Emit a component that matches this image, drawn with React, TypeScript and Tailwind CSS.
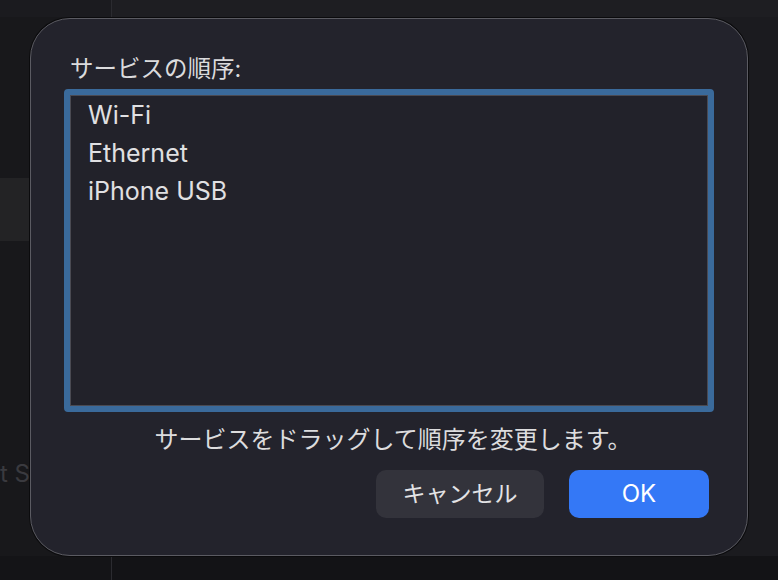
const services = ["Wi-Fi", "Ethernet", "iPhone USB"];

const font = "font-['Inter','Noto_Sans_CJK_JP',sans-serif]";

const App = () => {
  return (
    <div className={`relative w-[778px] h-[580px] overflow-hidden bg-[#1b1b1f] ${font}`}>
      {/* window behind the sheet */}
      <div className="flex h-full">
        <div className="w-[112px] flex flex-col bg-[#18181b] border-r border-[#2b2b30] overflow-hidden">
          <div className="h-[17px] bg-[#1b1b1f]" />
          <div className="h-[161px]" />
          <div className="h-[63px] w-[29px] bg-[#232325]" />
          <div className="flex-1 flex flex-col justify-end">
            <div className="pb-[68px] whitespace-nowrap text-[24px] leading-[28px] text-[#3a3a3f]">
              t S
            </div>
          </div>
          <div className="h-[24px] bg-[#141417]" />
        </div>
        <div className="flex-1 flex flex-col">
          <div className="h-[17px] bg-[#1e1e22]" />
          <div className="flex-1 bg-[#1b1b1f]" />
          <div className="h-[24px] bg-[#131316]" />
        </div>
      </div>

      {/* sheet */}
      <div className="absolute left-[30px] top-[18px] w-[718px] h-[538px] rounded-[40px] bg-[#23232c] border border-[#5b5b62] shadow-[0_0_0_1px_#0b0b0d] px-[33px] pt-[36px] flex flex-col">
        <div className="pl-[6px] text-[23.5px] leading-[28px] text-[#dbdbdd]">サービスの順序:</div>
        <div className="mt-[6px] h-[323px] rounded-[4px] border-[6px] border-[#3a6a9b]">
          <div className="h-full border border-[#4a4a52] bg-[#22222a]">
            {services.map((s) => (
              <div key={s} className="pl-[17px] h-[38px] leading-[38px] text-[25px] text-[#e0e0e2]">
                {s}
              </div>
            ))}
          </div>
        </div>
        <div className="mt-[12px] text-center pl-[8px] text-[24px] leading-[32px] text-[#dcdcde]">
          サービスをドラッグして順序を変更します。
        </div>
        <div className="mt-[14px] mr-[5px] flex justify-end gap-[25px]">
          <button className="w-[168px] h-[48px] rounded-[10px] bg-[#33333b] text-[23px] text-[#e3e3e5]">
            キャンセル
          </button>
          <button className="w-[140px] h-[48px] rounded-[10px] bg-[#3478f6] text-[24px] text-white">
            OK
          </button>
        </div>
      </div>
    </div>
  );
};

export default App;
